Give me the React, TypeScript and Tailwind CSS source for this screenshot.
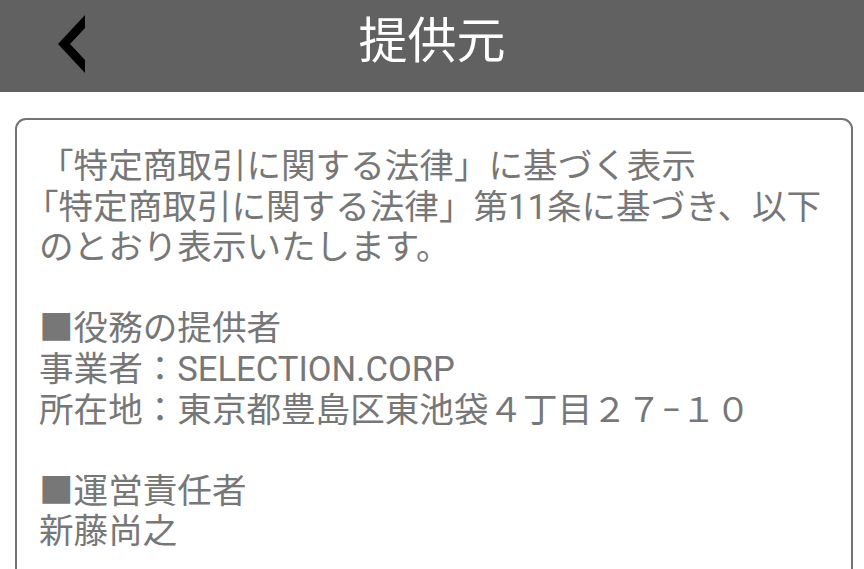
const lines = [
  '「特定商取引に関する法律」に基づく表示',
  '「特定商取引に関する法律」第11条に基づき、以下',
  'のとおり表示いたします。',
  '',
  '■役務の提供者',
  '事業者：SELECTION.CORP',
  '所在地：東京都豊島区東池袋４丁目２７−１０',
  '',
  '■運営責任者',
  '新藤尚之',
  '',
];

const BackIcon = () => (
  <svg width="30" height="60" viewBox="0 0 30 60" className="block">
    <polygon points="28,1 28,14 13,30 28,46 28,59 1,30" fill="#000" />
  </svg>
);

export default function App() {
  return (
    <div
      className="w-[864px] h-[569px] overflow-hidden bg-white"
      style={{ fontFamily: 'Roboto, "Noto Sans CJK JP", sans-serif' }}
    >
      <header className="relative h-[92px] bg-[#616161] flex items-center justify-center">
        <button className="absolute left-[57px] top-[14px]">
          <BackIcon />
        </button>
        <h1 className="text-white text-[49px] leading-none mb-[10px]">提供元</h1>
      </header>
      <main className="pt-[26px] pl-[15px] pr-[11px]">
        <div className="border-2 border-[#737373] rounded-[11px] px-[22px] pt-[26px] pb-6 h-[520px]">
          {lines.map((l, i) => (
            <p
              key={i}
              className={`text-[#777777] text-[34.6px] leading-[40.6px] whitespace-pre ${i === 1 ? '-ml-[15px]' : ''}`}
            >
              {l || '\u00a0'}
            </p>
          ))}
        </div>
      </main>
    </div>
  );
}
